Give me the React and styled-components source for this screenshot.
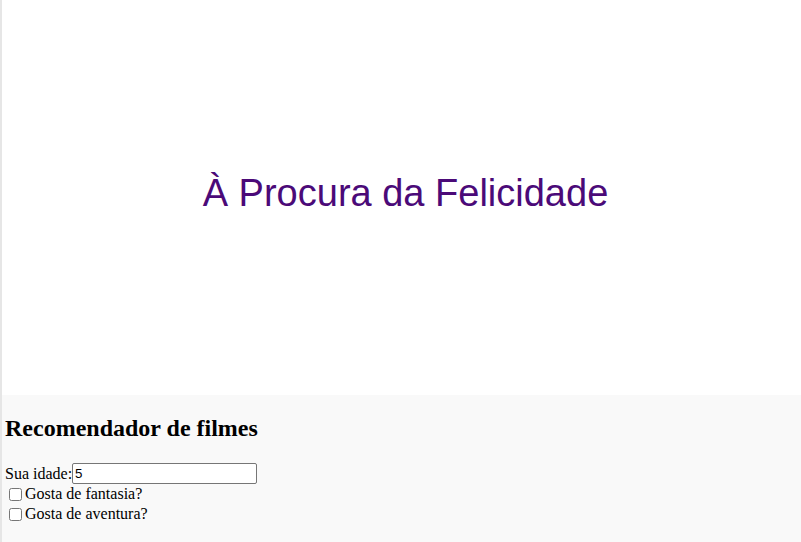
import React, { useState } from 'react';
import styled, { createGlobalStyle } from 'styled-components';

const GlobalStyle = createGlobalStyle`
  html, body {
    margin: 0;
    padding: 0;
    background: #ffffff;
  }
  body {
    font-family: "Liberation Serif", "Times New Roman", serif;
    font-size: 16px;
  }
`;

const Page = styled.div`
  min-height: 542px;
  border-left: 2px solid #e6e6e6;
  display: flex;
  flex-direction: column;
`;

const Hero = styled.div`
  height: 395px;
  display: flex;
  align-items: center;
  justify-content: center;
  background: #ffffff;
`;

const MovieTitle = styled.h1`
  margin: 0 0 8px 8px;
  font-family: "Liberation Sans", Arial, sans-serif;
  font-weight: normal;
  font-size: 38px;
  color: #4b0a78;
`;

const Panel = styled.div`
  flex: 1;
  background: #f9f9f9;
  padding: 0 3px;
  display: flow-root;
`;

const Heading = styled.h2`
  font-size: 24px;
  font-weight: bold;
  margin: 20px 0 21px;
`;

const Row = styled.div`
  display: flex;
  align-items: center;
`;

const Label = styled.label`
  line-height: 20px;
`;

const AgeInput = styled.input`
  font-family: "Liberation Sans", Arial, sans-serif;
  font-size: 13.33px;
  width: 185px;
  height: 21px;
  box-sizing: border-box;
  padding: 1px 2px;
  border: 1px solid #767676;
  border-radius: 2px;
  background: #fff;
`;

const Check = styled.input`
  margin: 3px 3px 3px 4px;
  width: 13px;
  height: 13px;
`;

export default function App() {
  const [age, setAge] = useState('5');
  const [fantasy, setFantasy] = useState(false);
  const [adventure, setAdventure] = useState(false);

  return (
    <>
      <GlobalStyle />
      <Page>
        <Hero>
          <MovieTitle>À Procura da Felicidade</MovieTitle>
        </Hero>
        <Panel>
          <Heading>Recomendador de filmes</Heading>
          <Row>
            <Label>Sua idade:</Label>
            <AgeInput type="text" value={age} onChange={(e) => setAge(e.target.value)} />
          </Row>
          <Row>
            <Check type="checkbox" checked={fantasy} onChange={(e) => setFantasy(e.target.checked)} />
            <Label>Gosta de fantasia?</Label>
          </Row>
          <Row>
            <Check type="checkbox" checked={adventure} onChange={(e) => setAdventure(e.target.checked)} />
            <Label>Gosta de aventura?</Label>
          </Row>
        </Panel>
      </Page>
    </>
  );
}
